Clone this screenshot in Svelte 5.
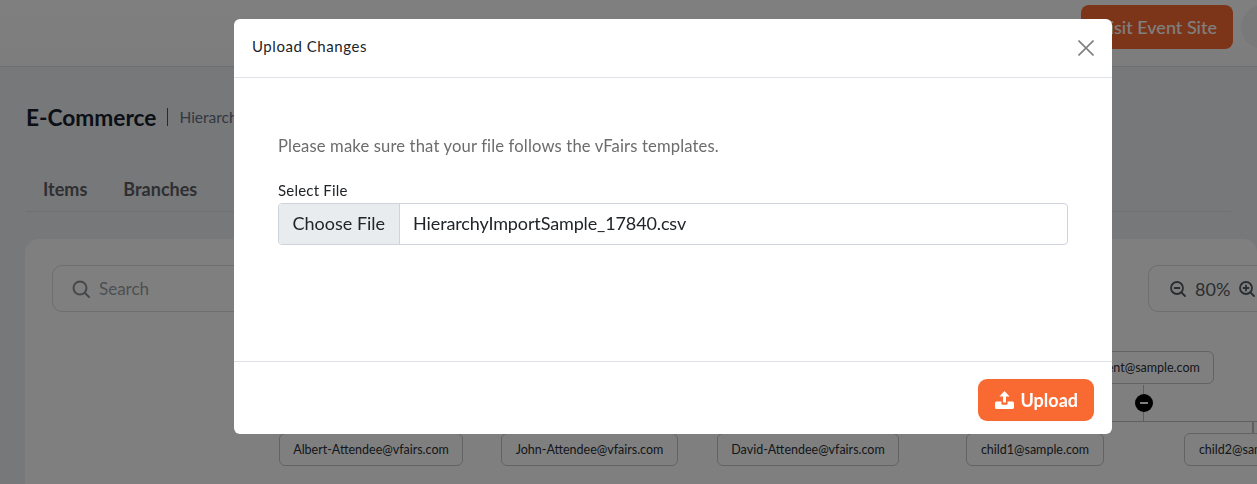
<script>
  const nodes = [
    { label: 'Albert-Attendee@vfairs.com', x: 279, y: 433, w: 184 },
    { label: 'John-Attendee@vfairs.com', x: 501, y: 433, w: 177 },
    { label: 'David-Attendee@vfairs.com', x: 717, y: 433, w: 182 },
    { label: 'child1@sample.com', x: 966, y: 433, w: 138 },
    { label: 'child2@sample.com', x: 1184, y: 433, w: 138 },
    { label: 'parent@sample.com', x: 1075, y: 351, w: 139 }
  ];
</script>

<div class="page">
  <header class="topbar">
    <button class="visit">Visit Event Site</button>
    <span class="avatar"></span>
  </header>

  <div class="title-row">
    <h1>E-Commerce</h1>
    <span class="crumb">Hierarchy</span>
  </div>

  <nav class="tabs">
    <span>Items</span>
    <span>Branches</span>
  </nav>

  <section class="card">
    <div class="card-top">
      <div class="search">
        <svg width="20" height="20" viewBox="0 0 20 20" fill="none" stroke="#8a9097" stroke-width="2">
          <circle cx="9" cy="9" r="6.5" />
          <path d="M14 14l4 4" stroke-linecap="round" />
        </svg>
        <span>Search</span>
      </div>
      <div class="zoom">
        <svg width="18" height="18" viewBox="0 0 18 18" fill="none" stroke="#555b61" stroke-width="1.8">
          <circle cx="8" cy="8" r="6" />
          <path d="M12.5 12.5l3.5 3.5M5.5 8h5" stroke-linecap="round" />
        </svg>
        <span>80%</span>
        <svg width="18" height="18" viewBox="0 0 18 18" fill="none" stroke="#555b61" stroke-width="1.8">
          <circle cx="8" cy="8" r="6" />
          <path d="M12.5 12.5l3.5 3.5M5.5 8h5M8 5.5v5" stroke-linecap="round" />
        </svg>
      </div>
    </div>
  </section>

  {#each nodes as node}
    <div class="node" style="left:{node.x}px;top:{node.y}px;width:{node.w}px">{node.label}</div>
  {/each}
  <i class="line stem"></i>
  <i class="line rail"></i>
  <i class="line drop"></i>
  <span class="collapse"></span>
</div>

<div class="backdrop">
  <div class="modal">
    <div class="modal-header">
      <h5>Upload Changes</h5>
      <button class="close" aria-label="Close">
        <svg width="16" height="16" viewBox="0 0 16 16" stroke="#7f7f7f" stroke-width="1.6">
          <path d="M0.5 0.5l15 15M15.5 0.5l-15 15" />
        </svg>
      </button>
    </div>
    <div class="modal-body">
      <p>Please make sure that your file follows the vFairs templates.</p>
      <label for="file">Select File</label>
      <div class="file-input" id="file">
        <span class="choose">Choose File</span>
        <span class="filename">HierarchyImportSample_17840.csv</span>
      </div>
    </div>
    <div class="modal-footer">
      <button class="upload">
        <svg width="19" height="18" viewBox="0 0 19 18" fill="#fff">
          <path d="M9.5 0L14.6 5.4H11V11.6H8V5.4H4.4Z" />
          <path d="M1.6 10.4H6.4V12.2C6.4 13.2 7.1 13.8 8 13.8H11C11.9 13.8 12.6 13.2 12.6 12.2V10.4H17.4C18.3 10.4 19 11.1 19 12V16.2C19 17.2 18.3 18 17.4 18H1.6C0.7 18 0 17.2 0 16.2V12C0 11.1 0.7 10.4 1.6 10.4Z" />
        </svg>
        Upload
      </button>
    </div>
  </div>
</div>

<style>
  :global(body) {
    margin: 0;
    overflow: hidden;
    font-family: Lato, "Noto Sans", sans-serif;
  }

  .page {
    position: relative;
    width: 1257px;
    height: 484px;
    overflow: hidden;
    background: #eef0f3;
  }

  .topbar {
    display: flex;
    justify-content: flex-end;
    align-items: center;
    gap: 8px;
    height: 66px;
    margin-right: -28px;
    background: linear-gradient(#fff, #fafafa);
    border-bottom: 1px solid #dcdfe3;
  }

  .visit {
    width: 152px;
    height: 44px;
    border: 0;
    border-radius: 8px;
    background: #fa6a32;
    color: #fff;
    font: 500 18px Lato, sans-serif;
    text-align: right;
    padding-right: 16px;
    margin-top: -12px;
    white-space: nowrap;
  }

  .avatar {
    width: 44px;
    height: 44px;
    border-radius: 50%;
    background: #f2f3f5;
    margin-top: -12px;
  }

  .title-row {
    display: flex;
    align-items: center;
    height: 24px;
    margin: 38px 0 0 26px;
  }

  h1 {
    margin: 0;
    font-size: 22.7px;
    font-weight: 700;
    color: #17202e;
  }

  .crumb {
    margin-left: 11px;
    padding-left: 11px;
    border-left: 1px solid #555;
    font-size: 15.5px;
    line-height: 18px;
    color: #667085;
  }

  .tabs {
    display: flex;
    gap: 36px;
    height: 37px;
    margin: 46px 26px 0;
    padding: 3px 17px 0;
    box-sizing: border-box;
    border-bottom: 1px solid #dfe1e5;
    font-size: 18px;
    font-weight: 700;
    color: #5f5f66;
  }

  .card {
    height: 300px;
    margin: 27px 0 0 25px;
    border-radius: 14px;
    background: #fff;
  }

  .card-top {
    display: flex;
    justify-content: space-between;
    padding: 26px 0 0 27px;
  }

  .search {
    display: flex;
    align-items: center;
    gap: 8px;
    width: 420px;
    height: 47px;
    padding-left: 18px;
    box-sizing: border-box;
    border: 1px solid #d9dce1;
    border-radius: 10px;
    color: #9aa0a6;
    font-size: 17px;
  }

  .zoom {
    display: flex;
    align-items: center;
    gap: 8px;
    width: 109px;
    height: 47px;
    padding-left: 20px;
    box-sizing: border-box;
    border: 1px solid #d9dce1;
    border-right: 0;
    border-radius: 10px 0 0 10px;
    font-size: 18px;
    color: #555b61;
  }

  .zoom svg {
    flex: none;
  }

  .node {
    position: absolute;
    height: 33px;
    box-sizing: border-box;
    display: flex;
    align-items: center;
    justify-content: center;
    white-space: nowrap;
    background: #fff;
    border: 1px solid #c4c6ca;
    border-radius: 6px;
    font-size: 12.5px;
    color: #2b2f36;
  }

  .line {
    position: absolute;
    background: #bdbfc3;
  }

  .stem {
    left: 1143px;
    top: 385px;
    width: 1px;
    height: 36px;
  }

  .rail {
    left: 1112px;
    top: 421px;
    width: 145px;
    height: 1px;
  }

  .drop {
    left: 1252px;
    top: 421px;
    width: 2px;
    height: 12px;
  }

  .collapse {
    position: absolute;
    left: 1135px;
    top: 394px;
    width: 18px;
    height: 18px;
    border-radius: 50%;
    background: #000;
  }

  .collapse::after {
    content: "";
    position: absolute;
    left: 5px;
    top: 8px;
    width: 8px;
    height: 2px;
    background: #fff;
  }

  .backdrop {
    position: fixed;
    inset: 0;
    background: rgba(0, 0, 0, 0.5);
  }

  .modal {
    display: flex;
    flex-direction: column;
    width: 878px;
    height: 415px;
    margin: 19px 0 0 234px;
    border-radius: 6px;
    background: #fff;
    color: #212529;
  }

  .modal-header {
    display: flex;
    justify-content: space-between;
    align-items: center;
    height: 58px;
    padding: 0 18px 0 18px;
    border-bottom: 1px solid #dee2e6;
  }

  h5 {
    margin: -5px 0 0;
    font-size: 15px;
    font-weight: 400;
    letter-spacing: 0.55px;
  }

  .close {
    display: flex;
    padding: 0;
    margin-top: -1px;
    border: 0;
    background: none;
  }

  .modal-body {
    flex: 1;
    padding: 58px 44px 0;
  }

  p {
    margin: 0 0 25px;
    font-size: 16.6px;
    line-height: 20px;
    letter-spacing: 0.15px;
    color: #6c6c6c;
  }

  label {
    display: block;
    margin-bottom: 4px;
    font-size: 15px;
    line-height: 18px;
    letter-spacing: 0.2px;
  }

  .file-input {
    display: flex;
    height: 42px;
    box-sizing: border-box;
    border: 1px solid #ced4da;
    border-radius: 4px;
    overflow: hidden;
    font-size: 18px;
    line-height: 38px;
  }

  .choose {
    padding: 0 14px 0 13.5px;
    background: #e9ecef;
    border-right: 1px solid #ced4da;
  }

  .filename {
    padding-left: 13px;
    letter-spacing: -0.13px;
  }

  .modal-footer {
    display: flex;
    justify-content: flex-end;
    align-items: center;
    height: 72px;
    padding-right: 18px;
    border-top: 1px solid #dee2e6;
  }

  .upload {
    display: flex;
    align-items: center;
    gap: 7px;
    height: 42px;
    margin-top: 3px;
    padding: 0 16px 0 17px;
    border: 0;
    border-radius: 9px;
    background: #f96a33;
    color: #fff;
    font: 700 18px Lato, sans-serif;
  }
</style>
